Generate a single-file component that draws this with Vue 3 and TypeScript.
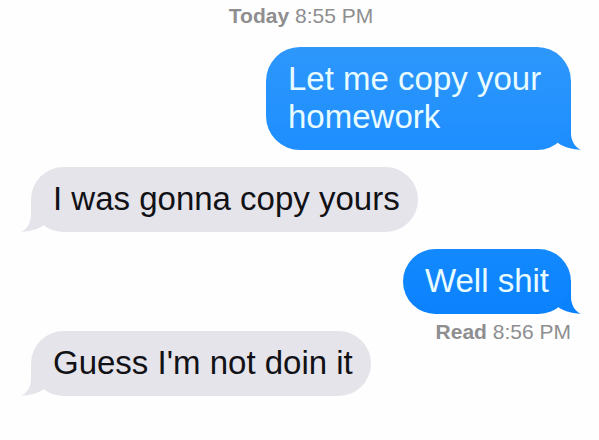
<script setup lang="ts">
interface Message {
  id: number
  from: 'me' | 'them'
  text: string
  tone: string
  receipt?: { label: string; time: string }
}

const started = { label: 'Today', time: '8:55 PM' }

const messages: Message[] = [
  { id: 1, from: 'me', text: 'Let me copy your homework', tone: 'light' },
  { id: 2, from: 'them', text: 'I was gonna copy yours', tone: 'grey' },
  {
    id: 3,
    from: 'me',
    text: 'Well shit',
    tone: 'deep',
    receipt: { label: 'Read', time: '8:56 PM' },
  },
  { id: 4, from: 'them', text: "Guess I'm not doin it", tone: 'grey' },
]
</script>

<template>
  <main class="thread">
    <p class="stamp"><strong>{{ started.label }}</strong> {{ started.time }}</p>
    <ol class="messages">
      <li v-for="m in messages" :key="m.id" class="message" :class="m.from">
        <div class="bubble" :class="m.tone">
          <p class="text">{{ m.text }}</p>
          <svg class="tail" viewBox="0 0 34 34" aria-hidden="true">
            <path d="M24 0V17C24 25 28 31 34 34C26 33 18 32 11 27L4 16Z" />
          </svg>
        </div>
        <p v-if="m.receipt" class="receipt">
          <strong>{{ m.receipt.label }}</strong> {{ m.receipt.time }}
        </p>
      </li>
    </ol>
  </main>
</template>

<style>
body {
  margin: 0;
  background: #fefefe;
}
</style>

<style scoped>
.thread {
  padding: 4px 28px 24px 31px;
  font-family: "Liberation Sans", Arial, sans-serif;
}

p {
  margin: 0;
}

.stamp,
.receipt {
  color: #8e8e90;
  font-size: 21px;
  line-height: 24px;
}

.stamp {
  text-align: center;
}

.messages {
  display: flex;
  flex-direction: column;
  gap: 17px;
  margin: 19px 0 0;
  padding: 0;
  list-style: none;
}

.message {
  display: flex;
  flex-direction: column;
  align-items: flex-start;
  isolation: isolate;
}

.me {
  align-items: flex-end;
}

.message:has(.receipt) {
  margin-bottom: -30px;
}

.bubble {
  position: relative;
  box-sizing: border-box;
  padding: 13px 22px 14px;
  border-radius: 34px;
  font-size: 33px;
  line-height: 38px;
}

.me .bubble {
  max-width: 305px;
  color: #e8fcff;
}

.light {
  background: linear-gradient(#2d97fb, #1e8eff);
}

.light .tail {
  fill: #1e8eff;
}

.deep {
  background: linear-gradient(#1389fe, #0b82fd);
}

.deep .tail {
  fill: #0b82fd;
}

.grey {
  background: #e5e4ea;
  color: #111116;
}

.grey .tail {
  fill: #e5e4ea;
}

.them .bubble {
  padding-right: 18px;
}

.tail {
  position: absolute;
  z-index: -1;
  right: -10px;
  bottom: 0;
  width: 34px;
  height: 34px;
}

.them .tail {
  right: auto;
  left: -10px;
  transform: scaleX(-1);
}

.receipt {
  padding-top: 6px;
}
</style>
